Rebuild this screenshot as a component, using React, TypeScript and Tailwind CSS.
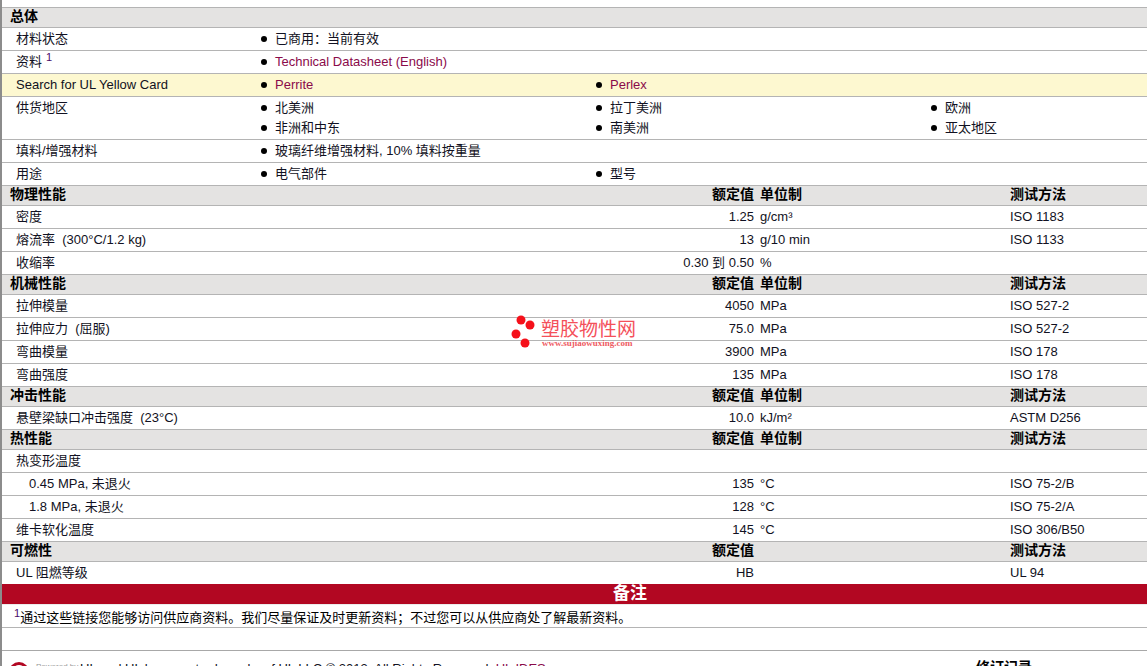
const font = '[font-family:"Liberation_Sans","Noto_Sans_CJK_SC",sans-serif]';

type R = { label: string; indent?: boolean; v?: string; u?: string; m?: string; last?: boolean };

function Header({ title, u = true }: { title: string; u?: boolean }) {
  return (
    <div className="flex h-5 border-b border-[#b4b4b4] bg-[#e4e3e2] pl-2 text-[14px] font-bold leading-[17px] text-black">
      <div className="w-[622px]">{title}</div>
      <div className="w-[122px] text-right">额定值</div>
      <div className="w-[256px] pl-[6px]">{u ? "单位制" : ""}</div>
      <div>测试方法</div>
    </div>
  );
}

function Data({ label, indent, v, u, m, last }: R) {
  return (
    <div className={`flex items-center text-[13px] text-[#111122] ${last ? "h-[22px]" : "h-[23px] border-b border-[#b4b4b4]"}`}>
      <div className={`w-[632px] whitespace-pre ${indent ? "pl-[27px]" : "pl-[14px]"}`}>{label}</div>
      <div className="w-[120px] whitespace-pre text-right">{v}</div>
      <div className="w-[256px] pl-[6px]">{u}</div>
      <div>{m}</div>
    </div>
  );
}

function Item({ text, link }: { text: string; link?: boolean }) {
  return (
    <div className="flex w-[335px] items-center">
      <span className="ml-[4px] mr-[8px] h-[6px] w-[6px] rounded-full bg-black" />
      <span className={link ? "text-[#8a0a4a]" : ""}>{text}</span>
    </div>
  );
}

function Info({ label, sup, items, bg, h = "h-[23px]" }: { label: string; sup?: boolean; items: { text: string; link?: boolean }[][]; bg?: string; h?: string }) {
  return (
    <div className={`flex ${h} border-b border-[#b4b4b4] text-[13px] leading-[22px] text-[#111122] ${bg ?? ""}`}>
      <div className="w-[255px] shrink-0 pl-[14px]">
        {label}
        {sup ? <sup className="ml-1 text-[11px] text-[#4a0a6a]">1</sup> : null}
      </div>
      <div className="flex flex-col">
        {items.map((row, i) => (
          <div key={i} className={`flex ${i > 0 ? "mt-[-2px]" : ""}`}>
            {row.map((it) => (
              <Item key={it.text} {...it} />
            ))}
          </div>
        ))}
      </div>
    </div>
  );
}

function Watermark() {
  return (
    <div className="absolute left-[509px] top-[315px] h-[36px] w-[130px]">
      <svg width="28" height="36" viewBox="0 0 28 36" className="absolute left-0 top-0">
        <circle cx="10" cy="5" r="4.5" fill="#f5101a" />
        <circle cx="19" cy="10" r="4.5" fill="#f5101a" />
        <circle cx="5" cy="19" r="4.5" fill="#f5101a" />
        <circle cx="14" cy="28" r="4.5" fill="#f5101a" />
      </svg>
      <div className="absolute left-[30px] top-[4px] whitespace-nowrap text-[19px] leading-[22px] text-[#f4505a]">塑胶物性网</div>
      <div className='absolute left-[31px] top-[23px] whitespace-nowrap [font-family:"Liberation_Serif",serif] text-[9px] font-bold leading-[10px] text-[#ee5a62]'>www.sujiaowuxing.com</div>
    </div>
  );
}

export default function App() {
  return (
    <div className={`relative h-[666px] w-[1147px] overflow-hidden border-l-2 border-[#8c8c8c] bg-white ${font}`}>
      <div className="h-[7px]" />
      <div className="border-t border-[#b4b4b4]">
        <div className="h-5 border-b border-[#b4b4b4] bg-[#e4e3e2] pl-2 text-[14px] font-bold leading-[17px] text-black">总体</div>
        <Info label="材料状态" items={[[{ text: "已商用：当前有效" }]]} />
        <Info label="资料" sup items={[[{ text: "Technical Datasheet (English)", link: true }]]} />
        <Info label="Search for UL Yellow Card" bg="bg-[#fdf8d0]" items={[[{ text: "Perrite", link: true }, { text: "Perlex", link: true }]]} />
        <Info
          label="供货地区"
          h="h-[43px]"
          items={[
            [{ text: "北美洲" }, { text: "拉丁美洲" }, { text: "欧洲" }],
            [{ text: "非洲和中东" }, { text: "南美洲" }, { text: "亚太地区" }],
          ]}
        />
        <Info label="填料/增强材料" items={[[{ text: "玻璃纤维增强材料, 10% 填料按重量" }]]} />
        <Info label="用途" items={[[{ text: "电气部件" }, { text: "型号" }]]} />

        <Header title="物理性能" />
        <Data label="密度" v="1.25" u="g/cm³" m="ISO 1183" />
        <Data label={"熔流率  (300°C/1.2 kg)"} v="13" u="g/10 min" m="ISO 1133" />
        <Data label="收缩率" v="0.30 到 0.50" u="%" />

        <Header title="机械性能" />
        <Data label="拉伸模量" v="4050" u="MPa" m="ISO 527-2" />
        <Data label={"拉伸应力  (屈服)"} v="75.0" u="MPa" m="ISO 527-2" />
        <Data label="弯曲模量" v="3900" u="MPa" m="ISO 178" />
        <Data label="弯曲强度" v="135" u="MPa" m="ISO 178" />

        <Header title="冲击性能" />
        <Data label={"悬壁梁缺口冲击强度  (23°C)"} v="10.0" u="kJ/m²" m="ASTM D256" />

        <Header title="热性能" />
        <Data label="热变形温度" />
        <Data label="0.45 MPa, 未退火" indent v="135" u="°C" m="ISO 75-2/B" />
        <Data label="1.8 MPa, 未退火" indent v="128" u="°C" m="ISO 75-2/A" />
        <Data label="维卡软化温度" v="145" u="°C" m="ISO 306/B50" />

        <Header title="可燃性" u={false} />
        <Data label="UL 阻燃等级" v="HB" m="UL 94" last />

        <div className="flex h-5 items-center bg-[#b20722] pl-[611px] text-[17px] font-bold text-white">备注</div>
        <div className="flex h-6 items-start border-b border-t border-[#b4b4b4] border-t-[#ececec] pl-3 pt-[5px] text-[13px] leading-[16px] text-black">
          <span className="mt-[-3px] text-[11px] leading-[12px] text-[#4a0a6a]">1</span>
          通过这些链接您能够访问供应商资料。我们尽量保证及时更新资料；不过您可以从供应商处了解最新资料。
        </div>
        <div className="h-[23px] border-b border-[#a8a8a8]" />
      </div>

      <div className="flex items-start">
        <div className="ml-[7px] mt-[11px] h-5 w-5 shrink-0 rounded-full border-[3px] border-[#b20722]" />
        <div className="ml-[7px] w-[44px] shrink-0 pt-[11px] text-[8px] leading-[10px] text-[#999999]">Powered by</div>
        <div className="w-[896px] shrink-0 whitespace-nowrap pt-[10px] text-[13px] leading-[16px] text-[#111122]">
          UL and UL logo are trademarks of UL LLC © 2013. All Rights Reserved. <span className="text-[#8a0a4a]">UL IDES</span>
        </div>
        <div className="pt-[7px] text-[14px] font-bold leading-[18px] text-black">修订记录</div>
      </div>

      <Watermark />
    </div>
  );
}
